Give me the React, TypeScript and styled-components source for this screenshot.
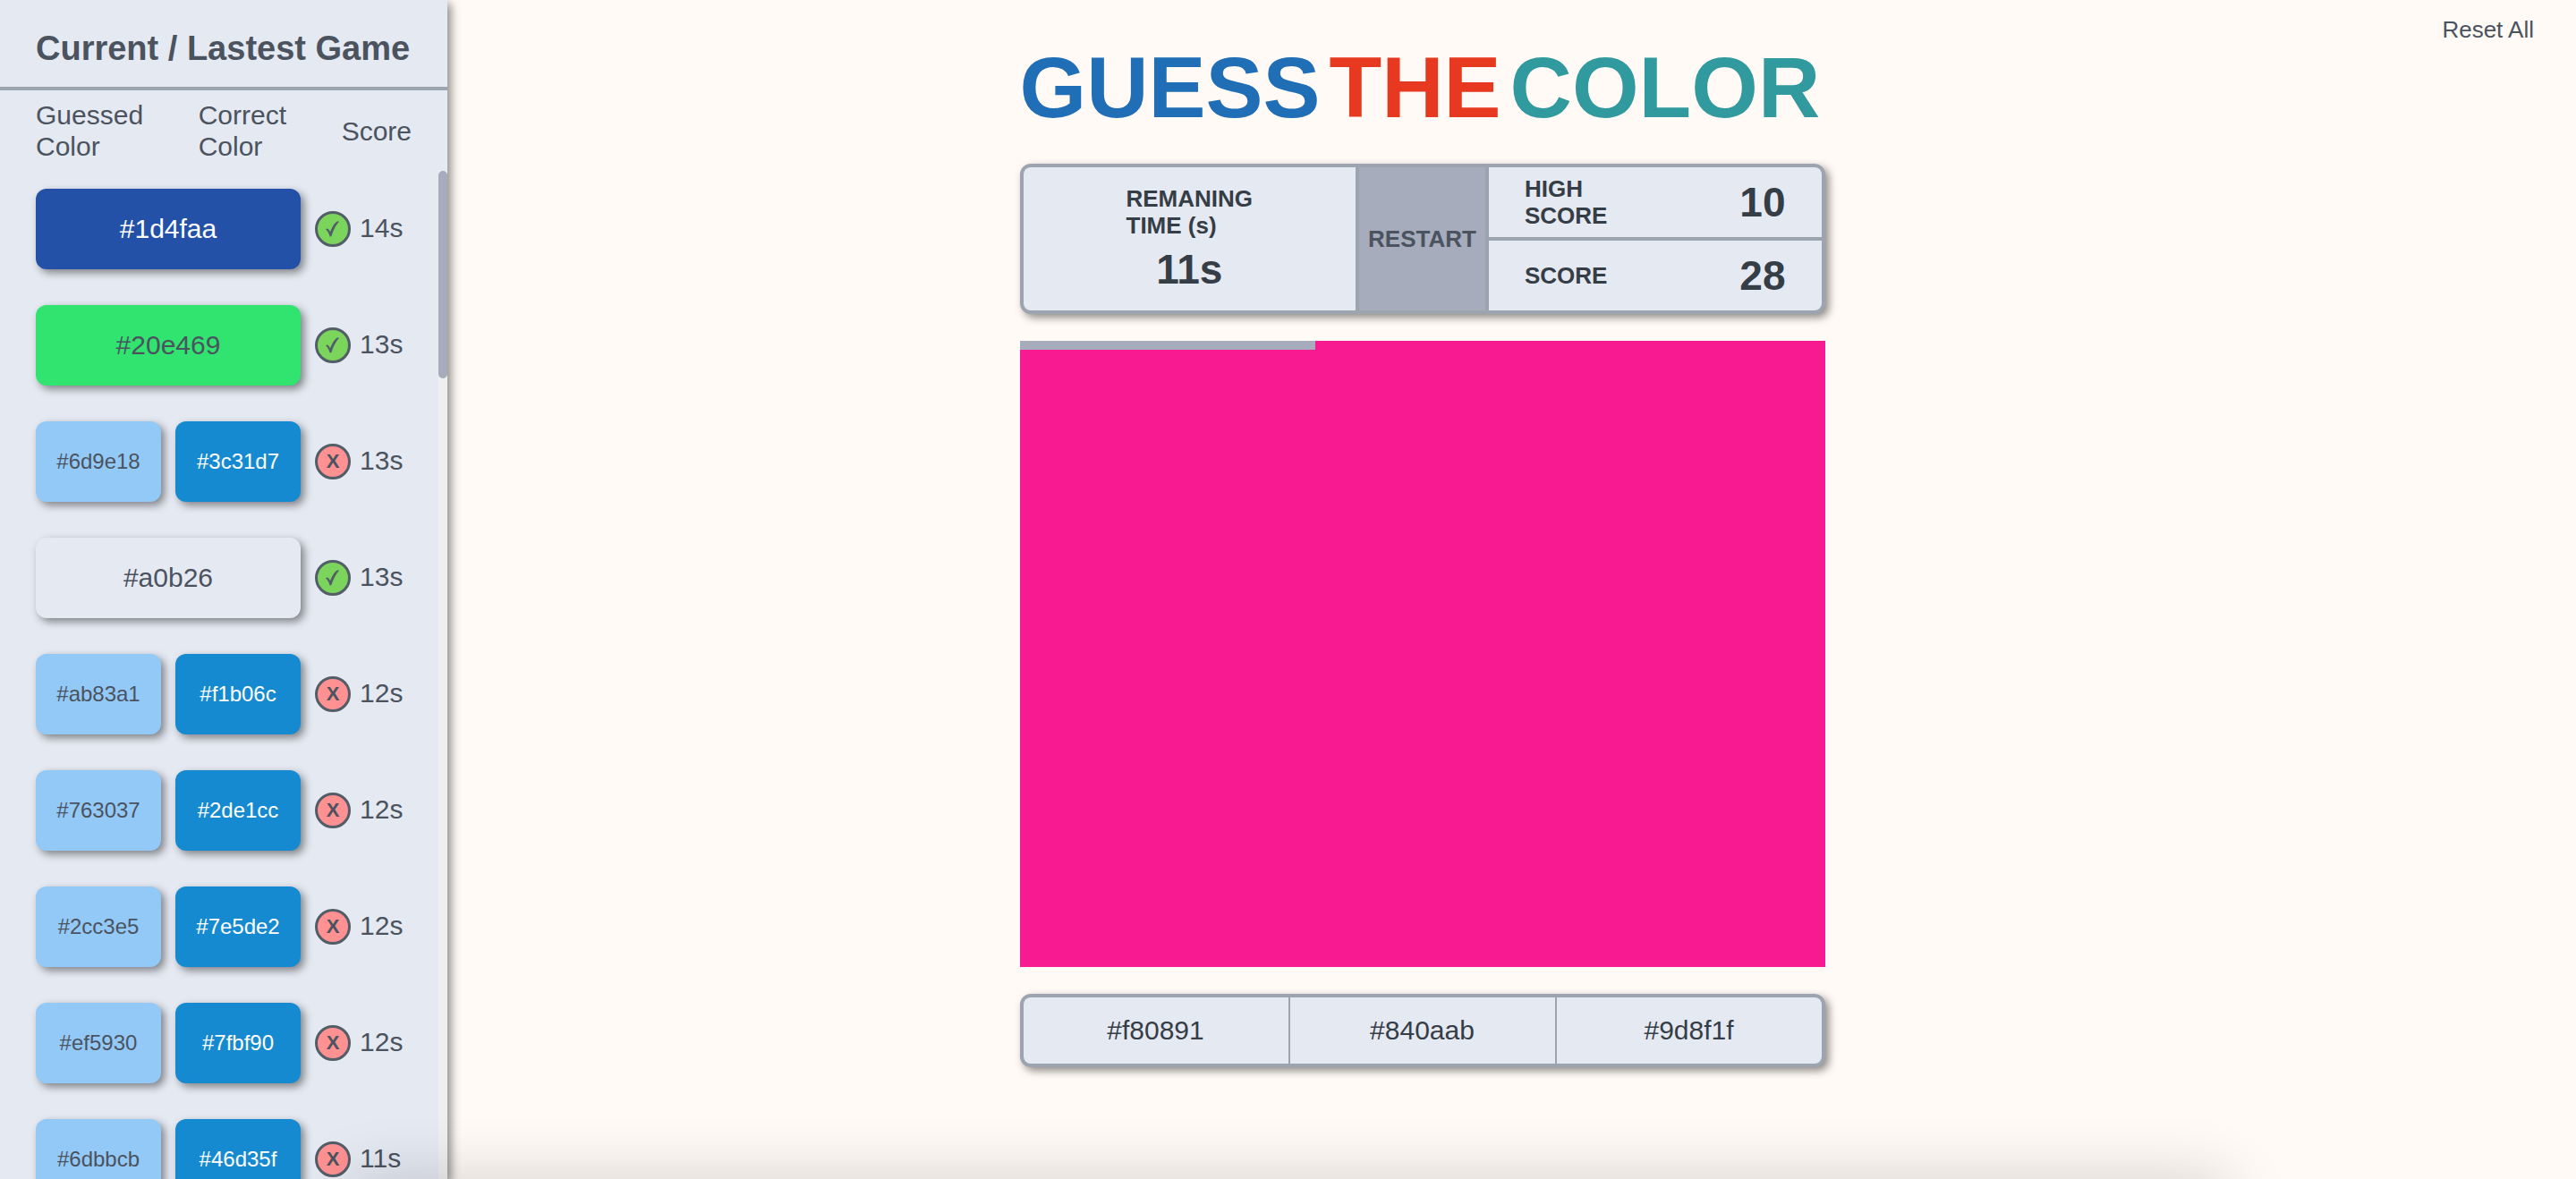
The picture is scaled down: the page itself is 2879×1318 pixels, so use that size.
import React from "react";
import styled, { createGlobalStyle } from "styled-components";

const GlobalStyle = createGlobalStyle`
  *, *::before, *::after { box-sizing: border-box; }
  body {
    margin: 0;
    background: #fffaf5;
    color: #4b535f;
    font-family: "Liberation Sans", Arial, Helvetica, sans-serif;
  }
  button { font-family: inherit; cursor: pointer; }
`;

const shadow = "4px 4px 10px rgba(0, 0, 0, 0.45)";

const Page = styled.div`
  display: flex;
  min-height: 100vh;
`;

const Sidebar = styled.aside`
  position: sticky;
  top: 0;
  z-index: 1;
  display: flex;
  flex-direction: column;
  flex: 0 0 500px;
  height: 100vh;
  overflow: hidden;
  background: #e5e9f2;
  box-shadow: ${shadow};
`;

const SidebarTitle = styled.h2`
  margin: 0;
  padding: 32px 40px 21px;
  border-bottom: 4px solid #9ca5af;
  font-size: 38px;
  line-height: 44px;
  white-space: nowrap;
`;

const ColumnLabels = styled.div`
  display: flex;
  justify-content: space-between;
  align-items: center;
  padding: 10px 40px;
  font-size: 30px;
  line-height: 35px;
`;

const HistoryArea = styled.div`
  display: flex;
  flex: 1;
  min-height: 0;
`;

const HistoryList = styled.ul`
  display: flex;
  flex-direction: column;
  gap: 40px;
  flex: 1;
  margin: 0;
  padding: 20px 30px 20px 40px;
  overflow: hidden;
  list-style: none;
`;

const HistoryItem = styled.li`
  display: flex;
  align-items: center;
  flex-shrink: 0;
  gap: 16px;
`;

const Swatches = styled.div`
  display: flex;
  gap: 16px;
  width: 296px;
`;

const Swatch = styled.div<{ $bg: string; $fg: string; $small?: boolean }>`
  display: flex;
  flex: 1;
  align-items: center;
  justify-content: center;
  height: 90px;
  border-radius: 12px;
  background: ${(p) => p.$bg};
  color: ${(p) => p.$fg};
  font-size: ${(p) => (p.$small ? 24 : 30)}px;
  box-shadow: ${shadow};
`;

const Result = styled.div`
  display: flex;
  align-items: center;
  gap: 10px;
`;

const Badge = styled.span<{ $ok: boolean }>`
  display: flex;
  align-items: center;
  justify-content: center;
  width: 40px;
  height: 40px;
  border: 3px solid #535d68;
  border-radius: 50%;
  background: ${(p) => (p.$ok ? "#7bd45b" : "#ff9192")};
  font-size: 22px;
  font-weight: 700;
`;

const Seconds = styled.span`
  padding-bottom: 4px;
  font-size: 30px;
  line-height: 35px;
`;

const ScrollTrack = styled.div`
  width: 10px;
  background: #efefef;
`;

const ScrollThumb = styled.div`
  width: 10px;
  border-radius: 5px;
  background: #a6acbb;
`;

const Main = styled.main`
  display: grid;
  flex: 1;
  grid-template-columns: minmax(0, 1fr) minmax(0, 900px) minmax(0, 1fr) 200px;
  align-items: start;
`;

const Game = styled.div`
  display: flex;
  flex-direction: column;
  grid-column: 2;
  grid-row: 1;
  gap: 30px;
  padding: 42px 0 60px;
`;

const Title = styled.h1`
  display: flex;
  gap: 10px;
  margin: 0;
  font-size: 96px;
  line-height: 111px;
`;

const Word = styled.span<{ $color: string }>`
  color: ${(p) => p.$color};
`;

const ResetButton = styled.button`
  grid-column: 3 / -1;
  grid-row: 1;
  justify-self: end;
  margin: 18px 47px 0 0;
  padding: 0;
  border: 0;
  background: none;
  color: #4b535f;
  font-size: 26px;
  line-height: 30px;
`;

const Board = styled.section`
  display: grid;
  grid-template-columns: 1fr auto 1fr;
  gap: 4px;
  border: 4px solid #9ca5af;
  border-radius: 12px;
  background: #9ca5af;
  color: #353d46;
  font-weight: 700;
  box-shadow: ${shadow};
`;

const TimeCell = styled.div`
  display: flex;
  flex-direction: column;
  align-items: center;
  justify-content: center;
  gap: 8px;
  border-radius: 8px 0 0 8px;
  background: #e5e9f2;
`;

const Label = styled.span`
  font-size: 26px;
  line-height: 30px;
`;

const Value = styled.span`
  font-size: 46px;
  line-height: 53px;
`;

const RestartButton = styled.button`
  padding: 0 10px;
  border: 0;
  background: #a6acbb;
  color: #4b535f;
  font-size: 26px;
  font-weight: 700;
`;

const Scores = styled.div`
  display: grid;
  grid-template-rows: 78px 78px;
  gap: 4px;
`;

const ScoreRow = styled.div`
  display: flex;
  align-items: center;
  justify-content: space-between;
  padding: 0 40px;
  background: #e5e9f2;
  &:first-child { border-top-right-radius: 8px; }
  &:last-child { border-bottom-right-radius: 8px; }
`;

const ColorPanel = styled.div`
  height: 700px;
  background: #f71a91;
`;

const TimeBar = styled.div`
  height: 10px;
  background: #a6acbb;
`;

const Options = styled.div`
  display: grid;
  grid-template-columns: repeat(3, 1fr);
  gap: 2px;
  overflow: hidden;
  border: 4px solid #9ca5af;
  border-radius: 12px;
  background: #9ca5af;
  box-shadow: ${shadow};
`;

const Option = styled.button`
  height: 74px;
  padding: 0;
  border: 0;
  background: #e5e9f2;
  color: #353d46;
  font-size: 30px;
`;

const BottomShade = styled.div`
  position: fixed;
  z-index: 2;
  top: 100%;
  left: 390px;
  right: 390px;
  height: 60px;
  box-shadow: 0 0 70px rgba(0, 0, 0, 0.18);
  pointer-events: none;
`;

type Round = { guess: string; correct?: string; bg?: string; fg?: string; time: number };

const rounds: Round[] = [
  { guess: "#1d4faa", bg: "#2251a7", fg: "#ffffff", time: 14 },
  { guess: "#20e469", bg: "#31e46f", time: 13 },
  { guess: "#6d9e18", correct: "#3c31d7", time: 13 },
  { guess: "#a0b26", bg: "#e5e9f2", time: 13 },
  { guess: "#ab83a1", correct: "#f1b06c", time: 12 },
  { guess: "#763037", correct: "#2de1cc", time: 12 },
  { guess: "#2cc3e5", correct: "#7e5de2", time: 12 },
  { guess: "#ef5930", correct: "#7fbf90", time: 12 },
  { guess: "#6dbbcb", correct: "#46d35f", time: 11 },
];

const options = ["#f80891", "#840aab", "#9d8f1f"];
const remaining = 11;
const roundTime = 30;
const visibleShare = 0.206;

const Check = () => (
  <svg width="20" height="20" viewBox="0 0 20 20" aria-hidden="true">
    <path
      d="M2 10.2C3.6 8.6 5.2 9.4 7 13.2C9.6 6.6 12.4 2.6 15.4 1.2L17 1.8C13.4 5.6 10.4 11.6 8.4 18L6.8 18.8C5.4 14.4 4 11.8 2 10.2Z"
      fill="#535d68"
    />
  </svg>
);

export default function App() {
  return (
    <>
      <GlobalStyle />
      <Page>
        <Sidebar>
          <SidebarTitle>Current / Lastest Game</SidebarTitle>
          <ColumnLabels>
            <span>Guessed<br />Color</span>
            <span>Correct<br />Color</span>
            <span>Score</span>
          </ColumnLabels>
          <HistoryArea>
            <HistoryList>
              {rounds.map((r) => (
                <HistoryItem key={r.guess}>
                  <Swatches>
                    {r.correct ? (
                      <>
                        <Swatch $small $bg="#93c9f7" $fg="#4b535f">{r.guess}</Swatch>
                        <Swatch $small $bg="#168ad0" $fg="#ffffff">{r.correct}</Swatch>
                      </>
                    ) : (
                      <Swatch $bg={r.bg ?? "#e5e9f2"} $fg={r.fg ?? "#4b535f"}>{r.guess}</Swatch>
                    )}
                  </Swatches>
                  <Result>
                    <Badge $ok={!r.correct}>{r.correct ? "X" : <Check />}</Badge>
                    <Seconds>{r.time}s</Seconds>
                  </Result>
                </HistoryItem>
              ))}
            </HistoryList>
            <ScrollTrack>
              <ScrollThumb style={{ height: `${visibleShare * 100}%` }} />
            </ScrollTrack>
          </HistoryArea>
        </Sidebar>
        <Main>
          <Game>
            <Title>
              <Word $color="#206eb6">GUESS</Word>
              <Word $color="#e73820">THE</Word>
              <Word $color="#319a9e">COLOR</Word>
            </Title>
            <Board>
              <TimeCell>
                <Label>REMANING<br />TIME (s)</Label>
                <Value>{remaining}s</Value>
              </TimeCell>
              <RestartButton type="button">RESTART</RestartButton>
              <Scores>
                <ScoreRow>
                  <Label>HIGH<br />SCORE</Label>
                  <Value>10</Value>
                </ScoreRow>
                <ScoreRow>
                  <Label>SCORE</Label>
                  <Value>28</Value>
                </ScoreRow>
              </Scores>
            </Board>
            <ColorPanel>
              <TimeBar style={{ width: `${(remaining / roundTime) * 100}%` }} />
            </ColorPanel>
            <Options>
              {options.map((o) => (
                <Option key={o} type="button">{o}</Option>
              ))}
            </Options>
          </Game>
          <ResetButton type="button">Reset All</ResetButton>
        </Main>
      </Page>
      <BottomShade />
    </>
  );
}
